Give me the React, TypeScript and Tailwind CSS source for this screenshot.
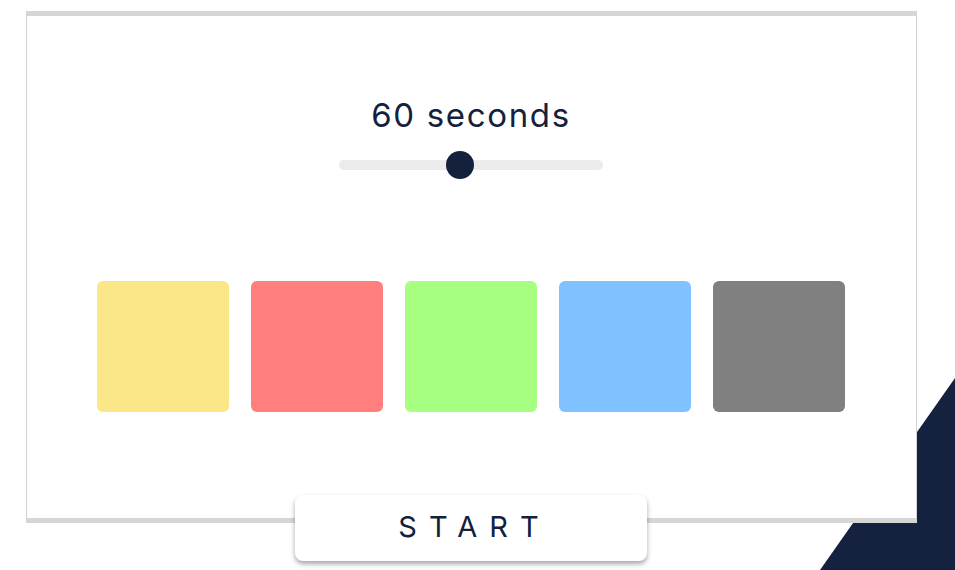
import { useState } from 'react';

const colors = ['#fbe788', '#ff7f7f', '#a6ff80', '#80c1ff', '#808080'];

export default function App() {
  const [seconds] = useState(60);
  const min = 10;
  const max = 120;
  const pct = (seconds - min) / (max - min);

  return (
    <div className="relative w-[955px] h-[570px] overflow-hidden bg-white font-['Inter','Noto_Sans',sans-serif] text-[#14213d]">
      {/* corner decoration */}
      <svg className="absolute inset-0" width="955" height="570" viewBox="0 0 955 570">
        <polygon points="955,378 955,570 820,570" fill="#15223f" />
      </svg>

      <div className="relative ml-[26px] mt-[11px] w-[891px] h-[512px] bg-white border-x border-x-[#d2d2d2] border-y-[5px] border-y-[#d6d6d6]">
        <div className="flex flex-col items-center pt-[75px] pr-[1px]">
          <div className="text-[33px] leading-[48px] font-normal tracking-[0.05em]">{seconds} seconds</div>

          {/* slider */}
          <div className="relative mt-[12px] w-[264px] h-[28px] flex items-center">
            <div className="w-full h-[10px] rounded-full bg-[#ebebeb]" />
            <div
              className="absolute top-0 w-[28px] h-[28px] rounded-full bg-[#14213d]"
              style={{ left: `${pct * (264 - 28)}px` }}
            />
          </div>

          <div className="mt-[102px] flex gap-[22px]">
            {colors.map((c) => (
              <div key={c} className="w-[132px] h-[131px] rounded-[6px]" style={{ backgroundColor: c }} />
            ))}
          </div>
        </div>

        <button className="absolute left-[268px] top-[479px] w-[352px] h-[66px] rounded-[8px] bg-white shadow-[0_3px_5px_rgba(0,0,0,0.35)] text-[29px] tracking-[12px] pl-[7px] pb-[3px] text-[#14213d]">
          START
        </button>
      </div>
    </div>
  );
}
